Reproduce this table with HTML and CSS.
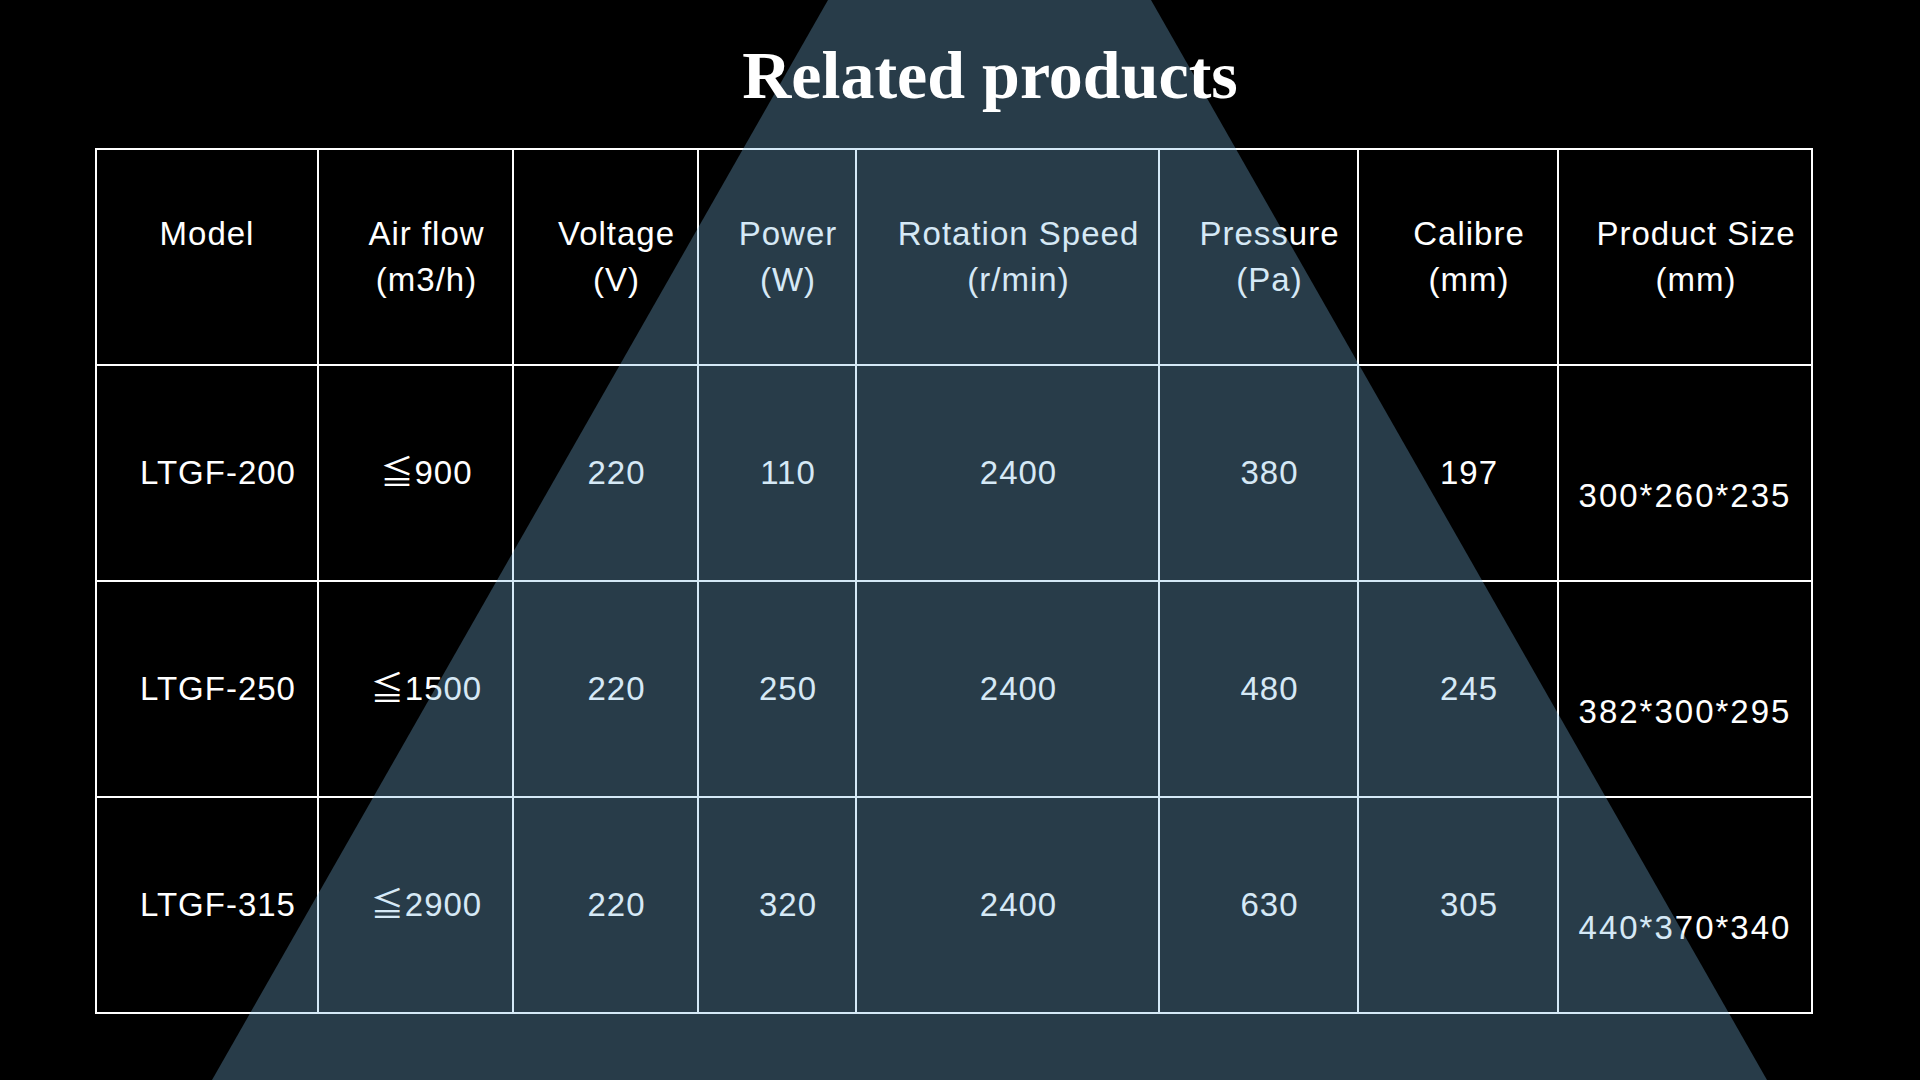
FILE: index.html
```html
<!DOCTYPE html>
<html lang="en">
<head>
<meta charset="utf-8">
<title>Related products</title>
<link rel="stylesheet" href="styles.css">
</head>
<body>
<div class="page">
  <div class="beam"></div>
  <h1 class="title">Related products</h1>
  <table class="spec">
    <colgroup>
      <col class="c1"><col class="c2"><col class="c3"><col class="c4">
      <col class="c5"><col class="c6"><col class="c7"><col class="c8">
    </colgroup>
    <thead>
      <tr>
        <th class="first">Model</th>
        <th>Air flow<br>(m3/h)</th>
        <th>Voltage<br>(V)</th>
        <th>Power<br>(W)</th>
        <th>Rotation Speed<br>(r/min)</th>
        <th>Pressure<br>(Pa)</th>
        <th>Calibre<br>(mm)</th>
        <th>Product Size<br>(mm)</th>
      </tr>
    </thead>
    <tbody>
      <tr>
        <td>LTGF-200</td><td>≦900</td><td>220</td><td>110</td><td>2400</td><td>380</td><td>197</td><td class="size">300*260*235</td>
      </tr>
      <tr>
        <td>LTGF-250</td><td>≦1500</td><td>220</td><td>250</td><td>2400</td><td>480</td><td>245</td><td class="size">382*300*295</td>
      </tr>
      <tr>
        <td>LTGF-315</td><td>≦2900</td><td>220</td><td>320</td><td>2400</td><td>630</td><td>305</td><td class="size">440*370*340</td>
      </tr>
    </tbody>
  </table>
</div>
</body>
</html>
```
FILE: styles.css
```css
html, body {
  margin: 0;
  padding: 0;
  background: #000;
}
body {
  width: 1920px;
  height: 1080px;
  overflow: hidden;
}
.page {
  position: relative;
  width: 1920px;
  height: 1080px;
  padding-top: 41px;
  box-sizing: border-box;
  display: flex;
  flex-direction: column;
}
.beam {
  position: absolute;
  left: 0;
  top: 0;
  width: 1920px;
  height: 1080px;
  background: rgba(125, 188, 226, 0.32);
  clip-path: polygon(828px 0, 1151px 0, 1767px 1080px, 212px 1080px);
  z-index: 1;
  pointer-events: none;
}
.title {
  position: relative;
  z-index: 2;
  margin: 0;
  padding-left: 60px;
  text-align: center;
  font-family: "Liberation Serif", "DejaVu Serif", serif;
  font-weight: bold;
  font-size: 68px;
  line-height: 68px;
  color: #fff;
}
.spec {
  margin: 39px 0 0 95px;
  width: 1716px;
  table-layout: fixed;
  border-collapse: collapse;
  font-family: "Liberation Sans", "Noto Sans CJK SC", sans-serif;
  font-size: 33px;
  line-height: 46px;
  letter-spacing: 1px;
  color: #fff;
}
.c1 { width: 222px; }
.c2 { width: 195px; }
.c3 { width: 185px; }
.c4 { width: 158px; }
.c5 { width: 303px; }
.c6 { width: 199px; }
.c7 { width: 200px; }
.c8 { width: 254px; }
.spec tr {
  height: 216px;
}
.spec th,
.spec td {
  border: 2px solid #fff;
  padding: 0 0 0 22px;
  text-align: center;
  vertical-align: middle;
  font-weight: normal;
  white-space: nowrap;
}
.spec th.first {
  padding: 0 0 46px 0;
}
.spec td.size {
  padding: 46px 0 0 0;
  letter-spacing: 2px;
}
```
